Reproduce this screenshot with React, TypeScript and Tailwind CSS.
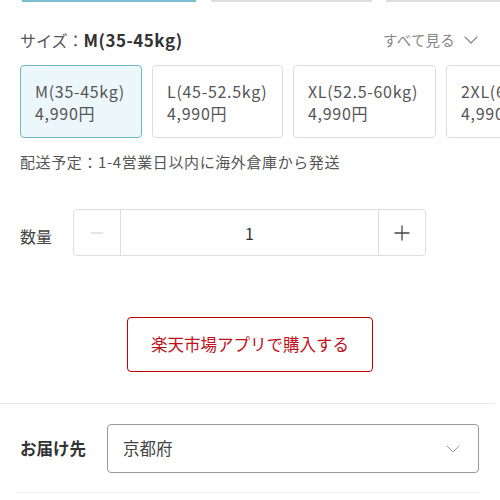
import { ChevronDown, Minus, Plus } from "lucide-react";

const sizes = [
  { label: "M(35-45kg)", price: "4,990円", w: "w-[122px]", active: true },
  { label: "L(45-52.5kg)", price: "4,990円", w: "w-[131px]", active: false },
  { label: "XL(52.5-60kg)", price: "4,990円", w: "w-[143px]", active: false },
  { label: "2XL(60-70kg)", price: "4,990円", w: "w-[140px]", active: false },
];

const App = () => {
  return (
    <div
      className="w-[500px] h-[500px] overflow-hidden bg-white text-[#333]"
      style={{ fontFamily: '"Noto Sans CJK JP", "Noto Sans", sans-serif' }}
    >
      {/* bottoms of the cards above */}
      <div className="flex h-[2px] overflow-hidden">
        <div className="ml-[22px] w-[183px] h-[2px] bg-[#7cbfcc]"></div>
        <div className="ml-[15px] w-[168px] h-[2px] bg-[#dddddd]"></div>
        <div className="ml-[14px] w-[120px] h-[2px] bg-[#dddddd]"></div>
      </div>

      {/* Size header */}
      <div className="flex items-center justify-between pl-5 pr-[17px] mt-[26px] h-6">
        <p className="text-[16px] leading-6">
          <span className="text-[#555]">サイズ：</span>
          <span className="font-bold text-[17px] tracking-[0.5px] text-[#333]">M(35-45kg)</span>
        </p>
        <button className="flex items-center gap-[4px] text-[14.5px] tracking-[0.2px] text-[#888]">
          すべて見る
          <ChevronDown className="w-6 h-6" strokeWidth={1.2} />
        </button>
      </div>

      {/* Size cards */}
      <div className="flex gap-[10px] pl-5 mt-[13px] overflow-hidden">
        {sizes.map((s) => (
          <div
            key={s.label}
            className={`${s.w} shrink-0 rounded-[4px] border px-[14px] pt-[14px] pb-[13px] text-[16px] leading-[22px] tracking-[0.7px] text-[#555] ${
              s.active ? "border-[#6fb7c6] bg-[#ecf7fc]" : "border-[#dcdcdc] bg-white"
            }`}
          >
            <div className="whitespace-nowrap">{s.label}</div>
            <div className="whitespace-nowrap">{s.price}</div>
          </div>
        ))}
      </div>

      {/* Shipping note */}
      <p className="pl-5 mt-[14px] text-[15px] leading-5 tracking-[0.6px] text-[#555]">
        配送予定：1-4営業日以内に海外倉庫から発送
      </p>

      {/* Quantity */}
      <div className="flex items-center pl-5 mt-[37px]">
        <span className="w-[53px] text-[16px] text-[#444] pt-[6px]">数量</span>
        <div className="flex w-[353px] h-[47px] rounded-[4px] border border-[#dddddd]">
          <button className="w-[47px] flex items-center justify-center border-r border-[#dddddd] text-[#ccc]">
            <Minus className="w-5 h-5" strokeWidth={1.2} />
          </button>
          <div className="flex-1 flex items-center justify-center text-[16px] text-[#333]">1</div>
          <button className="w-[47px] flex items-center justify-center border-l border-[#dddddd] text-[#444]">
            <Plus className="w-6 h-6" strokeWidth={1.3} />
          </button>
        </div>
      </div>

      {/* App purchase button */}
      <div className="flex justify-center mt-[61px]">
        <button className="w-[246px] h-[55px] rounded-[4px] border border-[#bf0000] text-[16.5px] text-[#c0101a]">
          楽天市場アプリで購入する
        </button>
      </div>

      <div className="mt-[31px] mr-[5px] h-px bg-[#e8e8e8]"></div>

      {/* Delivery destination */}
      <div className="flex items-center pl-5 mt-[20px]">
        <span className="w-[87px] text-[16.5px] font-bold text-[#333]">お届け先</span>
        <div className="flex items-center justify-between w-[372px] h-[49px] rounded-[4px] border border-[#999] pl-[15px] pr-[13px]">
          <span className="text-[16.5px] text-[#444]">京都府</span>
          <ChevronDown className="w-6 h-6 text-[#999]" strokeWidth={1} />
        </div>
      </div>

      <div className="mt-[19px] ml-[18px] mr-5 h-px bg-[#eeeeee]"></div>
    </div>
  );
};

export default App;
